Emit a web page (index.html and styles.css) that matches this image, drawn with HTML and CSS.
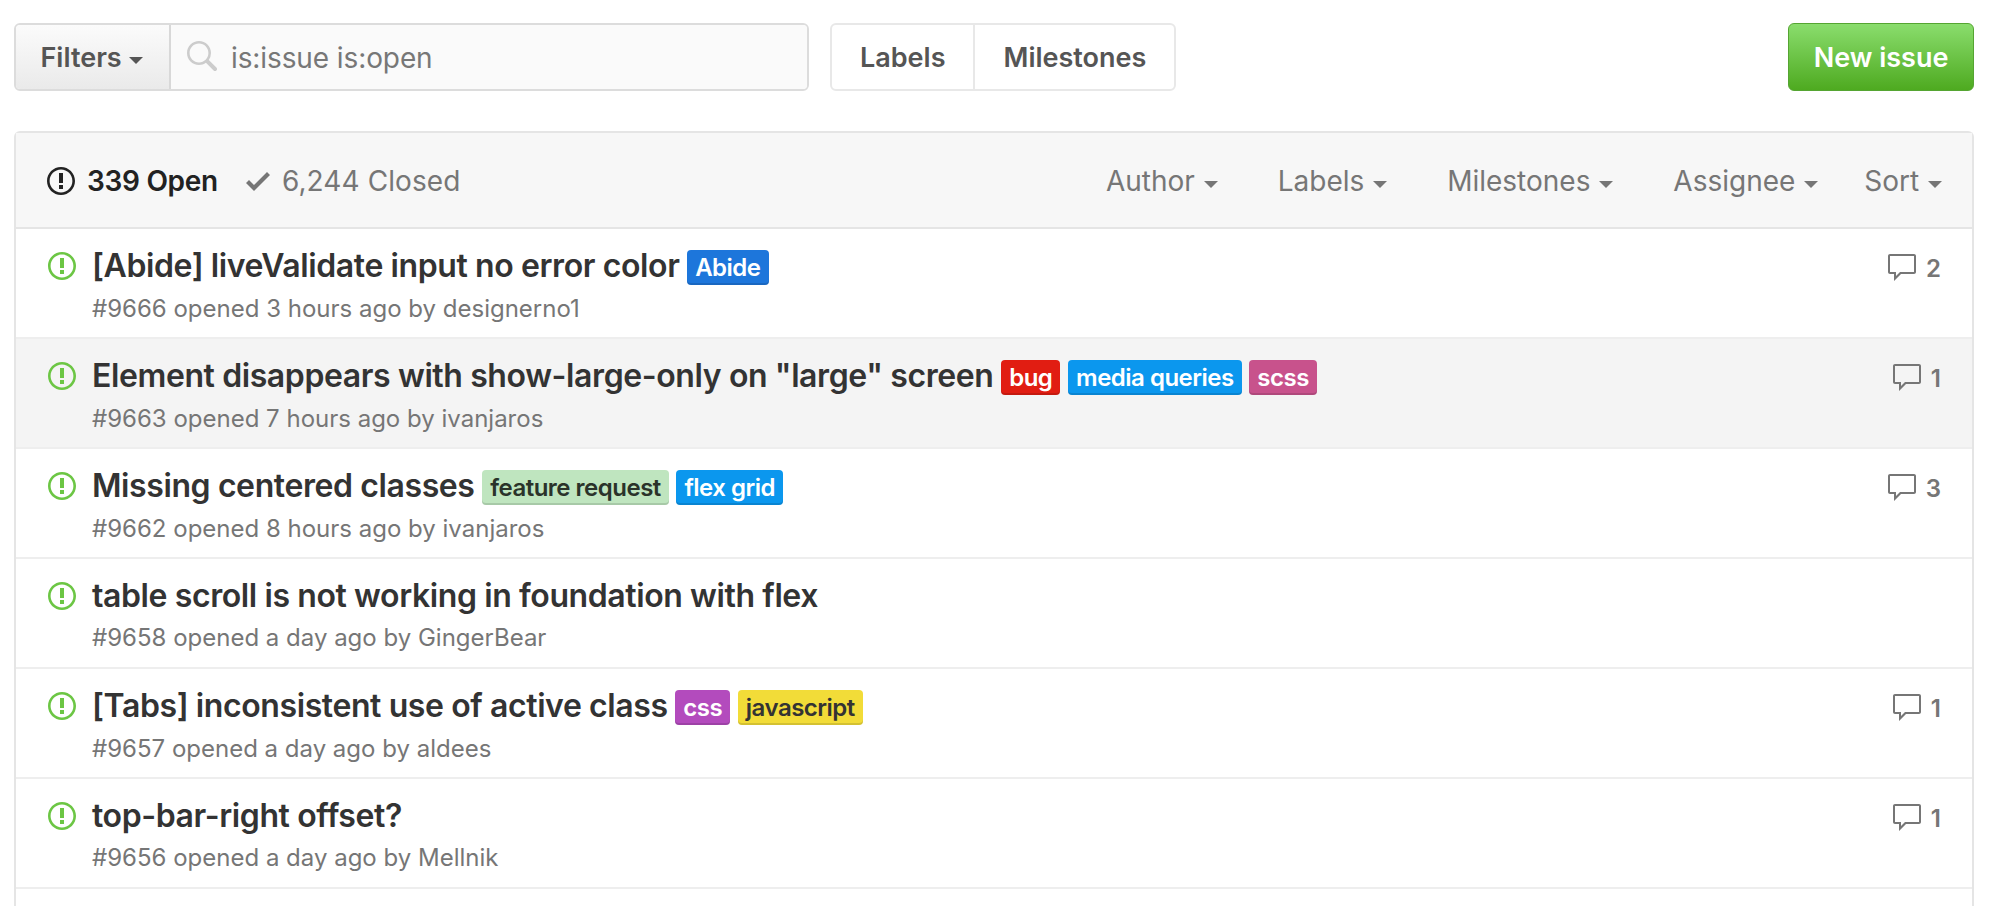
FILE: index.html
```html
<!DOCTYPE html>
<html lang="en">
<head>
    <meta charset="UTF-8">
    <title>Issues</title>
    <link rel="stylesheet" href="styles.css">
</head>
<body>
    <svg class="sprites" width="0" height="0">
        <symbol id="issue" viewBox="0 0 14 16"><path fill-rule="evenodd" d="M7 2.3c3.14 0 5.7 2.56 5.7 5.7s-2.56 5.7-5.7 5.7A5.71 5.71 0 0 1 1.3 8c0-3.14 2.56-5.7 5.7-5.7zM7 1C3.14 1 0 4.14 0 8s3.14 7 7 7 7-3.14 7-7-3.14-7-7-7zm1 3H6v5h2V4zm0 6H6v2h2v-2z"/></symbol>
        <symbol id="comment" viewBox="0 0 16 16"><path fill-rule="evenodd" d="M14 1H2c-.55 0-1 .45-1 1v8c0 .55.45 1 1 1h2v3.5L7.5 11H14c.55 0 1-.45 1-1V2c0-.55-.45-1-1-1zm0 9H7l-2 2v-2H2V2h12v8z"/></symbol>
    </svg>

    <div class="toolbar">
        <div class="search">
            <button class="filters">Filters <i class="caret"></i></button>
            <div class="search-input">
                <svg class="search-icon" viewBox="0 0 16 16"><path fill-rule="evenodd" d="M15.7 13.3l-3.81-3.83A5.93 5.93 0 0 0 13 6c0-3.31-2.69-6-6-6S1 2.69 1 6s2.69 6 6 6c1.3 0 2.48-.41 3.47-1.11l3.83 3.81c.19.2.45.3.7.3.25 0 .52-.09.7-.3a.996.996 0 0 0 0-1.41v.01zM7 10.7c-2.59 0-4.7-2.11-4.7-4.7 0-2.59 2.11-4.7 4.7-4.7 2.59 0 4.7 2.11 4.7 4.7 0 2.59-2.11 4.7-4.7 4.7z"/></svg>
                <span class="search-text">is:issue is:open</span>
            </div>
        </div>
        <div class="links">
            <a href="#">Labels</a>
            <a href="#">Milestones</a>
        </div>
        <a class="new-issue" href="#">New issue</a>
    </div>

    <div class="issues">
        <div class="issues-header">
            <div class="states">
                <span class="state open">
                    <svg class="state-icon"><use href="#issue"/></svg>339 Open
                </span>
                <span class="state">
                    <svg class="check-icon" viewBox="0 0 12 16"><path fill-rule="evenodd" d="M12 5l-8 8-4-4 1.5-1.5L4 10l6.5-6.5L12 5z"/></svg>6,244 Closed
                </span>
            </div>
            <div class="menus">
                <span class="menu">Author <i class="caret"></i></span>
                <span class="menu">Labels <i class="caret"></i></span>
                <span class="menu">Milestones <i class="caret"></i></span>
                <span class="menu">Assignee <i class="caret"></i></span>
                <span class="menu menu-sort">Sort <i class="caret"></i></span>
            </div>
        </div>

        <ul class="issue-list">
            <li class="issue">
                <svg class="issue-icon"><use href="#issue"/></svg>
                <div class="issue-main">
                    <div class="issue-title">[Abide] liveValidate input no error color <span class="label blue-dark">Abide</span></div>
                    <div class="issue-meta">#9666 opened 3 hours ago by designerno1</div>
                </div>
                <div class="comments"><svg class="comment-icon"><use href="#comment"/></svg>2</div>
            </li>
            <li class="issue hover">
                <svg class="issue-icon"><use href="#issue"/></svg>
                <div class="issue-main">
                    <div class="issue-title">Element disappears with show-large-only on "large" screen <span class="label red">bug</span> <span class="label blue">media queries</span> <span class="label pink">scss</span></div>
                    <div class="issue-meta">#9663 opened 7 hours ago by ivanjaros</div>
                </div>
                <div class="comments"><svg class="comment-icon"><use href="#comment"/></svg>1</div>
            </li>
            <li class="issue">
                <svg class="issue-icon"><use href="#issue"/></svg>
                <div class="issue-main">
                    <div class="issue-title">Missing centered classes <span class="label green">feature request</span> <span class="label blue">flex grid</span></div>
                    <div class="issue-meta">#9662 opened 8 hours ago by ivanjaros</div>
                </div>
                <div class="comments"><svg class="comment-icon"><use href="#comment"/></svg>3</div>
            </li>
            <li class="issue">
                <svg class="issue-icon"><use href="#issue"/></svg>
                <div class="issue-main">
                    <div class="issue-title">table scroll is not working in foundation with flex</div>
                    <div class="issue-meta">#9658 opened a day ago by GingerBear</div>
                </div>
            </li>
            <li class="issue">
                <svg class="issue-icon"><use href="#issue"/></svg>
                <div class="issue-main">
                    <div class="issue-title">[Tabs] inconsistent use of active class <span class="label purple">css</span> <span class="label yellow">javascript</span></div>
                    <div class="issue-meta">#9657 opened a day ago by aldees</div>
                </div>
                <div class="comments"><svg class="comment-icon"><use href="#comment"/></svg>1</div>
            </li>
            <li class="issue">
                <svg class="issue-icon"><use href="#issue"/></svg>
                <div class="issue-main">
                    <div class="issue-title">top-bar-right offset?</div>
                    <div class="issue-meta">#9656 opened a day ago by Mellnik</div>
                </div>
                <div class="comments"><svg class="comment-icon"><use href="#comment"/></svg>1</div>
            </li>
        </ul>
    </div>
</body>
</html>
```

FILE: styles.css
```css
html, body {
    height: 906px;
    overflow: hidden;
}
body {
    margin: 0;
    padding: 23px 20px 0 14px;
    box-sizing: border-box;
    background-color: #fff;
    color: #333;
    font-family: Inter, "Liberation Sans", sans-serif;
}
.sprites {
    position: absolute;
}
.caret {
    display: inline-block;
    width: 0;
    height: 0;
    border-top: 7px solid currentColor;
    border-left: 7.5px solid transparent;
    border-right: 7.5px solid transparent;
    vertical-align: 3px;
}

/* top row */
.toolbar {
    display: flex;
    height: 68px;
    margin-bottom: 40px;
}
.search {
    display: flex;
    width: 795px;
    box-sizing: border-box;
    border: 2px solid #dcdcdc;
    border-radius: 6px;
    overflow: hidden;
}
.filters {
    width: 155px;
    padding: 0 2px 0 0;
    border: none;
    border-right: 2px solid #d8d8d8;
    background: linear-gradient(#fbfbfb, #eaeaea);
    color: #555;
    font: 600 27px Inter, "Liberation Sans", sans-serif;
}
.search-input {
    flex: 1;
    display: flex;
    align-items: center;
    background-color: #fafafa;
    color: #777;
    font-size: 28px;
    letter-spacing: -0.1px;
}
.search-icon {
    width: 32px;
    height: 32px;
    margin: 0 14px;
    fill: #ccc;
}
.search-text {
    padding-top: 2px;
}
.links {
    display: flex;
    margin-left: 21px;
    border: 2px solid #e8e8e8;
    border-radius: 6px;
}
.links a {
    display: flex;
    align-items: center;
    padding: 0 28px;
    color: #555;
    font-size: 27px;
    font-weight: 600;
    text-decoration: none;
}
.links a + a {
    border-left: 2px solid #e8e8e8;
}
.new-issue {
    display: flex;
    align-items: center;
    justify-content: center;
    width: 186px;
    margin-left: auto;
    box-sizing: border-box;
    border: 1px solid #55a532;
    border-radius: 6px;
    background: linear-gradient(#8add6d, #4eaa20);
    color: #fff;
    font-size: 27px;
    font-weight: 600;
    text-decoration: none;
}

/* issue box */
.issues {
    min-height: 800px;
    border: 2px solid #e5e5e5;
    border-bottom: none;
    border-radius: 6px 6px 0 0;
}
.issues-header {
    display: flex;
    align-items: center;
    justify-content: space-between;
    height: 92px;
    padding: 2px 30px 0 31px;
    border-bottom: 2px solid #e5e5e5;
    background-color: #f7f7f7;
    color: #767676;
    font-size: 28px;
}
.states, .menus {
    display: flex;
    align-items: center;
}
.state {
    display: flex;
    align-items: center;
    margin-right: 28px;
    letter-spacing: 0.1px;
}
.state.open {
    color: #222;
    font-weight: 600;
    letter-spacing: -0.3px;
}
.state-icon {
    width: 28px;
    height: 32px;
    margin-right: 12px;
    fill: #222;
}
.check-icon {
    width: 24px;
    height: 32px;
    margin-right: 12px;
    fill: #767676;
}
.menu {
    margin-left: 60px;
}
.menu .caret {
    margin-left: 1px;
}
.menu-sort {
    margin-left: 46px;
}

/* rows */
.issue-list {
    list-style-type: none;
    margin: 0;
    padding: 0;
}
.issue {
    display: flex;
    height: 110px;
    box-sizing: border-box;
    padding: 19px 31px 0 32px;
    border-bottom: 2px solid #eee;
}
.issue.hover {
    background-color: #f4f4f4;
}
.issue-icon {
    flex-shrink: 0;
    width: 28px;
    height: 32px;
    margin: 2px 16px 0 0;
    fill: #6cc644;
}
.issue-main {
    flex: 1;
}
.issue-title {
    color: #333;
    font-size: 32px;
    font-weight: 600;
    line-height: 36px;
    letter-spacing: -0.4px;
}
.issue-meta {
    margin-top: 9px;
    color: #767676;
    font-size: 24px;
    line-height: 30px;
}
.label {
    display: inline-block;
    padding: 0 8px;
    border-radius: 4px;
    box-shadow: inset 0 -2px 0 rgba(0,0,0,0.12);
    font-size: 24px;
    line-height: 35px;
    letter-spacing: -0.5px;
    vertical-align: 1px;
}
.blue-dark { background-color: #1d76db; color: #fff; }
.red { background-color: #e11d12; color: #fff; }
.blue { background-color: #0b97ee; color: #fff; }
.pink { background-color: #c8528c; color: #fff; }
.green { background-color: #bfe5bf; color: #2a332a; }
.purple { background-color: #b34bbd; color: #fff; }
.yellow { background-color: #f2dc38; color: #333; }
.comments {
    display: flex;
    align-items: center;
    height: 32px;
    margin-top: 4px;
    color: #767676;
    font-size: 24px;
    font-weight: 600;
}
.comment-icon {
    width: 32px;
    height: 32px;
    margin-right: 8px;
    fill: #767676;
}
```
